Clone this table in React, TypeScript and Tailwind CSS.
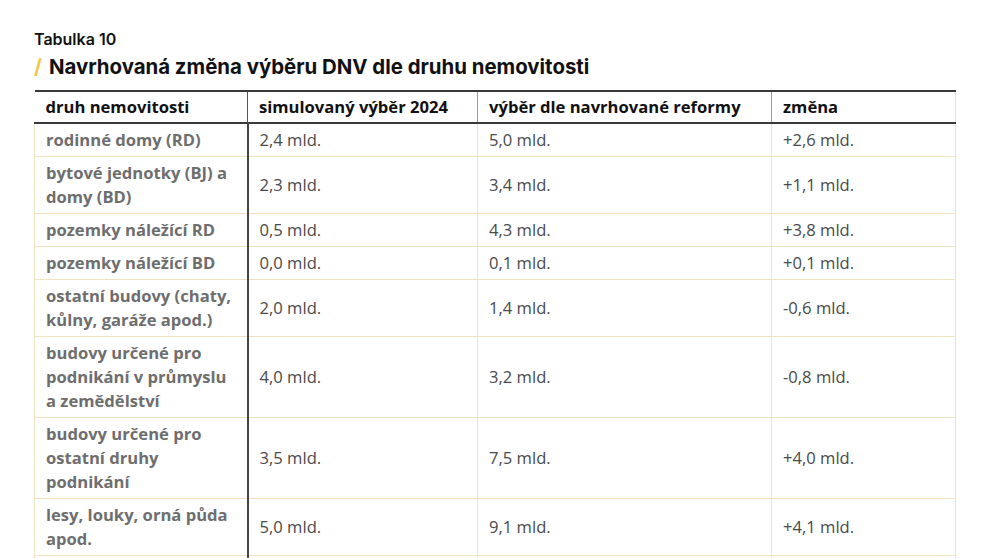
import React from "react";

const rows: { label: React.ReactNode; a: string; b: string; c: string }[] = [
  { label: "rodinné domy (RD)", a: "2,4 mld.", b: "5,0 mld.", c: "+2,6 mld." },
  { label: <>bytové jednotky (BJ) a<br />domy (BD)</>, a: "2,3 mld.", b: "3,4 mld.", c: "+1,1 mld." },
  { label: "pozemky náležící RD", a: "0,5 mld.", b: "4,3 mld.", c: "+3,8 mld." },
  { label: "pozemky náležící BD", a: "0,0 mld.", b: "0,1 mld.", c: "+0,1 mld." },
  { label: <>ostatní budovy (chaty,<br />kůlny, garáže apod.)</>, a: "2,0 mld.", b: "1,4 mld.", c: "-0,6 mld." },
  { label: <>budovy určené pro<br />podnikání v průmyslu<br />a zemědělství</>, a: "4,0 mld.", b: "3,2 mld.", c: "-0,8 mld." },
  { label: <>budovy určené pro<br />ostatní druhy<br />podnikání</>, a: "3,5 mld.", b: "7,5 mld.", c: "+4,0 mld." },
  { label: <>lesy, louky, orná půda<br />apod.</>, a: "5,0 mld.", b: "9,1 mld.", c: "+4,1 mld." },
];

export default function App() {
  return (
    <div className="bg-white w-[991px] h-[558px] overflow-hidden">
      <div className="pl-[34px] pt-[29px]">
        <div className="font-['Inter',sans-serif] font-semibold text-[16px] leading-[20px] text-[#111]">Tabulka 10</div>
        <div className="mt-[6px] font-['Inter',sans-serif] font-bold text-[20.4px] leading-[24px] text-[#111] flex items-center">
          <span className="text-[#f2c64a] font-bold mr-[7px]">/</span>
          <span>Navrhovaná změna výběru DNV dle druhu nemovitosti</span>
        </div>
        <table className="mt-[11px] table-fixed border-collapse w-[921px] font-['Open_Sans',sans-serif] text-[16.6px] leading-[24px]">
          <colgroup>
            <col className="w-[213px]" />
            <col className="w-[230px]" />
            <col className="w-[294px]" />
            <col className="w-[184px]" />
          </colgroup>
          <thead>
            <tr className="border-t-2 border-b-2 border-[#3a3a3a]">
              <th className="text-left font-bold text-[#111] px-[11px] py-[3px] border-r border-r-[#555] whitespace-nowrap">druh nemovitosti</th>
              <th className="text-left font-bold text-[#111] px-[11px] py-[3px] border-r border-r-[#9a9a9a] whitespace-nowrap">simulovaný výběr 2024</th>
              <th className="text-left font-bold text-[#111] px-[11px] py-[3px] border-r border-r-[#9a9a9a] whitespace-nowrap">výběr dle navrhované reformy</th>
              <th className="text-left font-bold text-[#111] px-[11px] py-[3px] border-r border-r-[#f1e3c2] whitespace-nowrap">změna</th>
            </tr>
          </thead>
          <tbody>
            {rows.map((r, i) => (
              <tr key={i} className="border-b border-[#f1e3c2]">
                <td className="align-middle font-bold text-[#6e6e6e] px-[11px] py-[4px] border-l border-l-[#f1e3c2] border-r-2 border-r-[#444] whitespace-nowrap">{r.label}</td>
                <td className="align-middle text-[#4a4a4a] px-[11px] py-[4px] border-r border-r-[#f1e3c2]">{r.a}</td>
                <td className="align-middle text-[#4a4a4a] px-[11px] py-[4px] border-r border-r-[#f1e3c2]">{r.b}</td>
                <td className="align-middle text-[#4a4a4a] px-[11px] py-[4px] border-r border-r-[#f1e3c2]">{r.c}</td>
              </tr>
            ))}
            <tr className="border-b border-[#f1e3c2]">
              <td className="h-[32px] border-l border-l-[#f1e3c2] border-r-2 border-r-[#444]"></td>
              <td className="h-[32px] border-r border-r-[#f1e3c2]"></td>
              <td className="h-[32px] border-r border-r-[#f1e3c2]"></td>
              <td className="h-[32px] border-r border-r-[#f1e3c2]"></td>
            </tr>
          </tbody>
        </table>
      </div>
    </div>
  );
}
